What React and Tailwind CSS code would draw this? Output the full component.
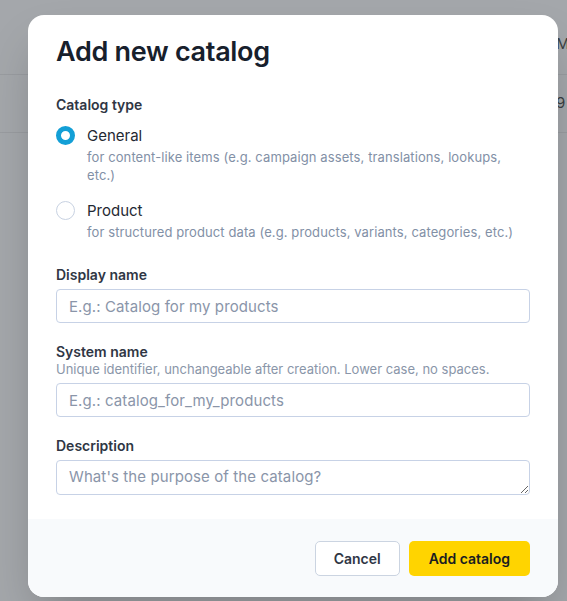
import React, { useState } from 'react';

const font = { fontFamily: 'Inter, "Noto Sans", sans-serif' };

function Radio({ checked, label, hint, onSelect }) {
  return (
    <label className="flex items-start gap-3 cursor-pointer" onClick={onSelect}>
      <span
        className={`mt-[1px] h-[19px] w-[19px] shrink-0 rounded-full ${
          checked ? 'border-[5px] border-[#139fd6] bg-white' : 'border border-[#c8d2e2] bg-white'
        }`}
      />
      <span className="flex flex-col">
        <span className="text-[15px] leading-[21px] text-[#1f2933]">{label}</span>
        <span className="mt-[2px] max-w-[432px] text-[13px] leading-[18px] tracking-[0.1px] text-[#8290a6]">{hint}</span>
      </span>
    </label>
  );
}

function Field({ label, help, placeholder, textarea }) {
  return (
    <div className="flex flex-col">
      <span className="text-[14px] font-semibold leading-[18px] text-[#2f3644]">{label}</span>
      {help && <span className="text-[13px] leading-[16px] text-[#8a96a9]">{help}</span>}
      {textarea ? (
        <textarea
          rows={1}
          placeholder={placeholder}
          className="mt-[5px] block h-[35px] w-full rounded-[4px] border border-[#c7d2e6] px-3 py-[5px] text-[15px] leading-[22px] tracking-[0.1px] text-[#1f2933] placeholder:text-[#8a95a9] outline-none"
        />
      ) : (
        <input
          placeholder={placeholder}
          className={`${help ? 'mt-[6px]' : 'mt-[5px]'} block h-[34px] w-full rounded-[4px] border border-[#c7d2e6] px-3 text-[15px] tracking-[0.1px] text-[#1f2933] placeholder:text-[#8a95a9] outline-none`}
        />
      )}
    </div>
  );
}

export default function App() {
  const [type, setType] = useState('general');

  return (
    <div className="relative h-[601px] w-[567px] overflow-hidden bg-[#a4a7ab]" style={font}>
      {/* page behind the overlay */}
      <div className="flex flex-col pt-[15px]">
        <div className="flex h-[60px] items-center border-b border-[#999ca0] pl-[556px] text-[15px] text-[#3b3e42] whitespace-nowrap">
          Modified
        </div>
        <div className="flex h-[58px] items-center border-b border-[#999ca0] pl-[556px] text-[15px] text-[#3b3e42] whitespace-nowrap">
          9 catalogs
        </div>
      </div>

      {/* modal */}
      <div className="absolute left-[28px] top-[15px] flex w-[530px] flex-col overflow-hidden rounded-[16px] bg-white shadow-2xl">
        <div className="flex flex-col px-7 pt-[19px] pb-[24px]">
          <h1 className="text-[27px] font-semibold leading-[36px] tracking-[-0.3px] text-[#17202c]">Add new catalog</h1>

          <div className="mt-[25px] text-[14px] font-semibold leading-[20px] text-[#2f3644]">Catalog type</div>
          <div className="mt-[10px] flex flex-col gap-[16px]">
            <Radio
              checked={type === 'general'}
              onSelect={() => setType('general')}
              label="General"
              hint="for content-like items (e.g. campaign assets, translations, lookups, etc.)"
            />
            <Radio
              checked={type === 'product'}
              onSelect={() => setType('product')}
              label="Product"
              hint="for structured product data (e.g. products, variants, categories, etc.)"
            />
          </div>

          <div className="mt-[25px] flex flex-col gap-[20px]">
            <Field label="Display name" placeholder="E.g.: Catalog for my products" />
            <Field
              label="System name"
              help="Unique identifier, unchangeable after creation. Lower case, no spaces."
              placeholder="E.g.: catalog_for_my_products"
            />
            <Field label="Description" placeholder="What's the purpose of the catalog?" textarea />
          </div>
        </div>

        <div className="flex justify-end gap-[9px] bg-[#f8fafc] px-7 pt-[22px] pb-[21px]">
          <button className="h-[35px] rounded-[5px] border border-[#cbd4e1] bg-white px-[18px] text-[14px] font-semibold text-[#2f3644]">
            Cancel
          </button>
          <button className="h-[35px] rounded-[5px] bg-[#ffd400] px-[20px] text-[14px] font-semibold text-[#1a1d21]">
            Add catalog
          </button>
        </div>
      </div>
    </div>
  );
}
